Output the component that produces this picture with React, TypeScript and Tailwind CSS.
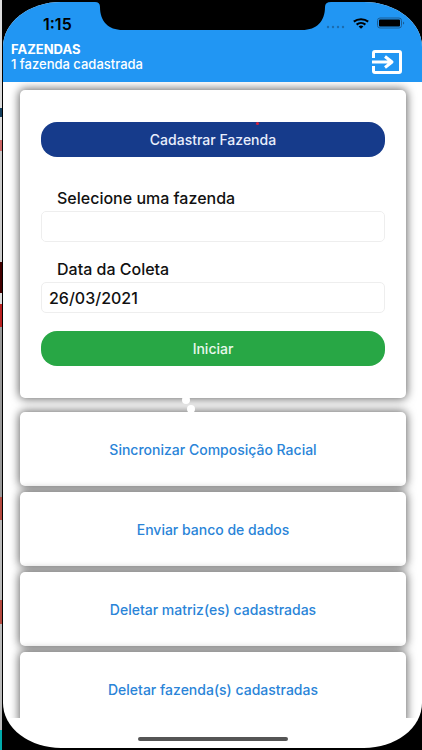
import type { ReactNode } from "react";

interface ActionProps {
    id: string;
    label: string;
}

const actions: ActionProps[] = [
    { id: "1", label: "Sincronizar Composição Racial" },
    { id: "2", label: "Enviar banco de dados" },
    { id: "3", label: "Deletar matriz(es) cadastradas" },
    { id: "4", label: "Deletar fazenda(s) cadastradas" },
];

function Card({ children }: { children: ReactNode }) {
    return (
        <div className="rounded-[5px] bg-white shadow-[0_0_10px_1px_rgba(0,0,0,0.6)]">
            {children}
        </div>
    )
}

function StatusBar() {
    return (
        <div className="flex h-10 items-start justify-between pl-10 pr-[17px] text-black">
            <span className="pt-3 text-[16px] leading-5 font-semibold">1:15</span>

            <div className="flex items-center gap-2 pt-[15px]">
                <svg className="h-3 w-5" viewBox="0 0 20 12" fill="#1c6cb0">
                    <circle cx="3" cy="10" r="1.2" />
                    <circle cx="8" cy="10" r="1.2" />
                    <circle cx="13" cy="10" r="1.2" />
                    <circle cx="18" cy="10" r="1.2" />
                </svg>
                <svg className="h-3 w-4" viewBox="0 0 16 12" fill="none" stroke="#000" strokeWidth="2">
                    <path d="M0.8 4.6a10.4 8.6 0 0 1 14.4 0" />
                    <path d="M3.6 7.6a6.4 5.4 0 0 1 8.8 0" />
                    <path d="M8 11.8 5.6 9.6a3.4 2.8 0 0 1 4.8 0z" fill="#000" stroke="none" />
                </svg>
                <svg className="h-3 w-7" viewBox="0 0 28 12">
                    <rect x="0.5" y="1" width="24" height="10" rx="2.5" fill="none" stroke="#1c5c94" />
                    <rect x="2" y="2.5" width="21" height="7" rx="1" />
                    <path d="M26 4.5v3q1.200-.5 1.200-1.500t-1.200-1.500" fill="#1c5c94" />
                </svg>
            </div>
        </div>
    )
}

function Notch() {
    return (
        <svg className="absolute top-0 left-1/2 h-[28px] w-[236px] -translate-x-1/2" viewBox="0 0 236 28">
            <path d="M0 0h236q-6 0-6 5c0 14-8 23-23 23H28C13 28 5 19 5 5q0-5-5-5z" />
        </svg>
    )
}

function ExitIcon() {
    return (
        <svg className="h-6 w-[30px]" viewBox="0 0 30 24" fill="none" stroke="#fff" strokeWidth="3" strokeLinejoin="round">
            <path d="M1.500 8V3q0-1.500 1.500-1.500h24q1.500 0 1.500 1.500v18q0 1.500-1.500 1.500H3q-1.500 0-1.500-1.500v-5" />
            <path d="M0 12h19M13 6.500l7 5.500-7 5.500" />
        </svg>
    )
}

export default function App() {
    return (
        <div className="flex h-screen bg-[#222] font-['Inter',sans-serif]">
            <div className="w-[2px] shrink-0 bg-[linear-gradient(#ddd_0_108px,#15405e_108px_117px,#ddd_117px_140px,#c66_140px_151px,#ccc_151px_262px,#400_262px_293px,#ddd_293px_304px,#b22_304px_327px,#999_327px_497px,#b54a40_497px_520px,#bbb_520px_600px,#b54a40_600px_624px,#bbb_624px_730px,#0aa_730px)]" />

            <div className="flex grow bg-black py-[2px] pl-px">
                <div className="relative flex grow flex-col overflow-hidden rounded-t-[58px_45px] rounded-b-[58px_45px] bg-white">
                    <header className="bg-[#2196f3]">
                        <StatusBar />
                        <Notch />

                        <div className="flex h-10 items-start justify-between pl-2 pr-5 text-white">
                            <div>
                                <h1 className="text-[13px] leading-[15px] font-bold">FAZENDAS</h1>
                                <p className="text-[13px] leading-[15px] font-medium">1 fazenda cadastrada</p>
                            </div>
                            <button type="button" aria-label="Sair" className="pt-2">
                                <ExitIcon />
                            </button>
                        </div>
                    </header>

                    <main className="mb-[30px] flex min-h-0 grow flex-col gap-[6px] overflow-hidden pt-2 pr-4 pl-[17px]">
                        <div className="relative mb-2 shrink-0">
                            <Card>
                                <form className="flex flex-col px-[21px] py-8">
                                    <button type="button" className="h-[35px] rounded-2xl bg-[#163b8b] text-[14px] font-medium text-[#e8eefc]">
                                        Cadastrar Fazenda
                                    </button>

                                    <label htmlFor="fazenda" className="mt-[31px] mb-[3px] pl-4 text-[16px] leading-5 font-medium text-[#111]">
                                        Selecione uma fazenda
                                    </label>
                                    <input id="fazenda" className="h-[31px] rounded-[5px] border border-[#eee] px-[7px] text-[16px] font-medium" />

                                    <label htmlFor="data" className="mt-[17px] mb-[3px] pl-4 text-[16px] leading-5 font-medium text-[#111]">
                                        Data da Coleta
                                    </label>
                                    <input id="data" defaultValue="26/03/2021" className="h-[31px] rounded-[5px] border border-[#eee] px-[7px] text-[16px] font-medium text-[#111]" />

                                    <button type="button" className="mt-[18px] h-[35px] rounded-2xl bg-[#28a745] text-[14px] font-medium text-[#e8f8ec]">
                                        Iniciar
                                    </button>
                                </form>
                            </Card>
                            <span className="absolute top-8 left-[236px] size-[3px] rounded-full bg-[#d8203a]" />
                            <span className="absolute -bottom-[6px] left-[162px] size-2 rounded-full bg-white" />
                            <span className="absolute -bottom-[15px] left-[167px] z-10 size-2 rounded-full bg-white" />
                        </div>

                        {actions.map((action) => (
                            <div key={action.id} className="shrink-0">
                                <Card>
                                    <button type="button" className="h-[74px] w-full text-[14px] font-medium text-[#2a84d8]">
                                        {action.label}
                                    </button>
                                </Card>
                            </div>
                        ))}
                    </main>

                    <div className="absolute bottom-[7px] left-1/2 h-1 w-[150px] -translate-x-1/2 rounded-full bg-[#555]" />
                </div>
            </div>
        </div>
    )
}
